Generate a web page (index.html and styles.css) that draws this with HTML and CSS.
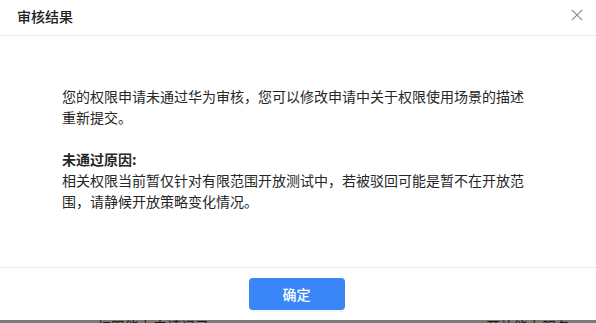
FILE: index.html
```html
<!DOCTYPE html>
<html lang="zh-CN">
<head>
<meta charset="utf-8">
<title>审核结果</title>
<link rel="stylesheet" href="styles.css">
</head>
<body>
<div class="dialog">
  <div class="dialog-header">
    <span class="dialog-title">审核结果</span>
    <span class="dialog-close" aria-label="关闭">
      <svg width="12" height="12" viewBox="0 0 12 12"><path d="M0.8 0.8 L11.2 11.2 M11.2 0.8 L0.8 11.2" stroke="#8a8a8a" stroke-width="1.2" fill="none"/></svg>
    </span>
  </div>
  <div class="dialog-body">
    <p class="para">您的权限申请未通过华为审核，您可以修改申请中关于权限使用场景的描述重新提交。</p>
    <p class="para reason-title">未通过原因:</p>
    <p class="para">相关权限当前暂仅针对有限范围开放测试中，若被驳回可能是暂不在开放范围，请静候开放策略变化情况。</p>
  </div>
  <div class="dialog-footer">
    <button class="btn-primary">确定</button>
  </div>
</div>
<div class="backdrop">
  <span class="behind-text">权限能力申请记录</span>
  <span class="behind-text">开放能力服务</span>
</div>
</body>
</html>
```

FILE: styles.css
```css
html, body {
  margin: 0;
  padding: 0;
}
body {
  width: 596px;
  height: 323px;
  overflow: hidden;
  background: #ffffff;
  font-family: "Noto Sans CJK SC", "Noto Sans", sans-serif;
  color: #262626;
}
.dialog {
  height: 320px;
  display: flex;
  flex-direction: column;
  background: #ffffff;
}
.dialog-header {
  height: 35px;
  border-bottom: 1px solid #ebebeb;
  display: flex;
  align-items: flex-start;
  justify-content: space-between;
  padding: 7px 13px 0 17px;
  box-sizing: content-box;
  height: 28px;
}
.dialog-title {
  font-size: 14px;
  line-height: 18px;
  font-weight: 500;
  color: #222;
}
.dialog-close {
  display: flex;
  margin-top: 2px;
  width: 12px;
  height: 12px;
}
.dialog-body {
  flex: 1;
  padding: 50px 62px 0 62px;
  font-size: 14px;
  line-height: 21px;
}
.para {
  margin: 0;
}
.reason-title {
  margin-top: 21px;
  font-weight: 700;
}
.dialog-footer {
  border-top: 1px solid #ebebeb;
  padding: 10px 0;
  display: flex;
  justify-content: center;
}
.btn-primary {
  width: 96px;
  height: 32px;
  margin-right: 3px;
  border: none;
  border-radius: 4px;
  background: #3a86f7;
  color: #ffffff;
  font-family: inherit;
  font-size: 14px;
  font-weight: 500;
  box-shadow: 0 2px 0 rgba(0, 0, 0, 0.04);
  padding: 0;
}
.backdrop {
  height: 3px;
  overflow: hidden;
  background: #7a7a7a;
  display: flex;
  justify-content: space-between;
  padding: 0 26px 0 97px;
}
.behind-text {
  font-size: 14px;
  line-height: 14px;
  margin-top: -1px;
  color: #1c1c1c;
}
```
